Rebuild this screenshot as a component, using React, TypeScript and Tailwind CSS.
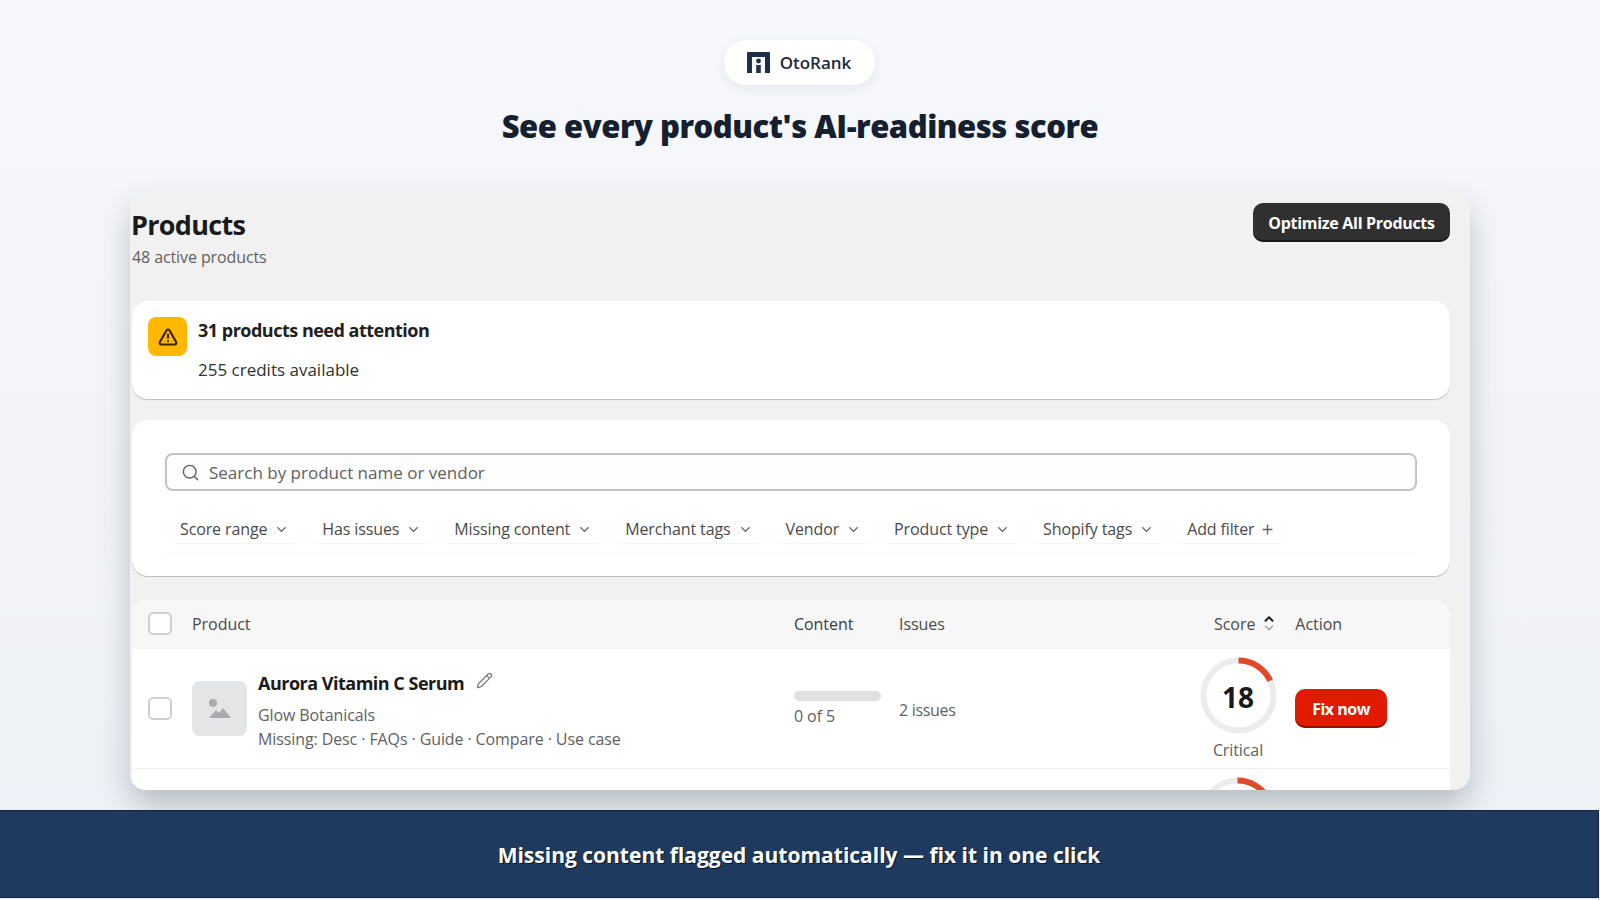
import { AlertTriangle, ChevronDown, ChevronUp, Pencil, Plus, Search } from "lucide-react";

const filters = ["Score range", "Has issues", "Missing content", "Merchant tags", "Vendor", "Product type", "Shopify tags"];

const Logo = () => (
  <svg width="23" height="21" viewBox="0 0 23 21" className="text-[#1e2f4d]">
    <path d="M1 0h21a1 1 0 0 1 1 1v20h-5V5H5v16H0V1a1 1 0 0 1 1-1z" fill="currentColor" />
    <circle cx="11.5" cy="9" r="2.4" fill="currentColor" />
    <rect x="9.2" y="13" width="4.6" height="8" fill="currentColor" />
  </svg>
);

const ScoreRing = ({ score }: { score: number }) => {
  const r = 35;
  const c = 2 * Math.PI * r;
  return (
    <svg width="77" height="77" viewBox="0 0 77 77" className="shrink-0">
      <circle cx="38.5" cy="38.5" r={r} fill="none" stroke="#ececec" strokeWidth="6" />
      <circle
        cx="38.5"
        cy="38.5"
        r={r}
        fill="none"
        stroke="#e2492b"
        strokeWidth="6"
        strokeDasharray={`${(c * score) / 100} ${c}`}
        transform="rotate(-90 38.5 38.5)"
      />
    </svg>
  );
};

const Checkbox = () => (
  <div className="h-[23px] w-6 shrink-0 rounded-[5px] border-2 border-[#d0d0d0] bg-white" />
);

export default function App() {
  return (
    <div className="flex h-[900px] w-[1600px] flex-col overflow-hidden bg-gradient-to-b from-[#f7f8fb] to-[#edf0f6] font-['Open_Sans','Noto_Sans',sans-serif] text-[#303030]">
      <div className="flex h-[190px] shrink-0 flex-col items-center pt-[40px]">
        <div className="mr-[2px] flex h-[45px] w-[151px] items-center justify-center gap-[10px] rounded-[22px] bg-white shadow-[0_3px_12px_rgba(30,50,80,0.08)]">
          <Logo />
          <span className="text-[17px] font-semibold text-[#1e2a3c]">OtoRank</span>
        </div>
        <h1 className="mt-[19px] text-[31px] font-extrabold leading-[44px] tracking-[-0.47px] text-[#14202f]">
          See every product's AI-readiness score
        </h1>
      </div>

      <div className="mx-[130px] flex h-[600px] shrink-0 flex-col overflow-hidden rounded-[16px] bg-[#f1f1f1] pl-[2px] pr-[20px] shadow-[0_16px_32px_-2px_rgba(40,60,65,0.3)]">
        <div className="flex h-[111px] shrink-0 items-start justify-between pt-[13px]">
          <div>
            <h2 className="-ml-[1px] mt-[4px] text-[27px] font-bold leading-[36px] tracking-[-0.7px] text-[#1a1a1a]">Products</h2>
            <p className="mt-[2px] text-[16px] leading-[24px] tracking-[-0.1px] text-[#616161]">48 active products</p>
          </div>
          <button className="flex h-[39px] w-[197px] items-center justify-center rounded-[10px] bg-[#303030] text-[16px] font-bold tracking-[-0.3px] text-white shadow-[inset_0_-2px_0_rgba(0,0,0,0.45)]">
            Optimize All Products
          </button>
        </div>

        <div className="flex h-[98px] shrink-0 gap-[11px] rounded-[16px] bg-white px-[16px] pt-[16px] shadow-[0_1px_1px_rgba(0,0,0,0.22)]">
          <div className="flex h-[39px] w-[39px] shrink-0 items-center justify-center rounded-[8px] bg-[#ffb800]">
            <AlertTriangle size={20} strokeWidth={2.6} className="text-[#3a2600]" />
          </div>
          <div className="pt-[1px]">
            <div className="text-[18px] font-bold leading-[24px] tracking-[-0.5px] text-[#202020]">31 products need attention</div>
            <div className="mt-[16px] text-[17px] leading-[24px] text-[#303030]">255 credits available</div>
          </div>
        </div>

        <div className="mt-[21px] flex h-[156px] shrink-0 flex-col rounded-[16px] bg-white px-[33px] pt-[33px] shadow-[0_1px_1px_rgba(0,0,0,0.22)]">
          <div className="flex h-[38px] items-center gap-[9px] rounded-[8px] border-2 border-[#c4c4c4] bg-[#fdfdfd] px-[14px]">
            <Search size={19} strokeWidth={1.8} className="text-[#616161]" />
            <span className="pt-[2px] text-[17px] text-[#616161]">Search by product name or vendor</span>
          </div>
          <div className="mt-[24px] flex items-center gap-[9px] border-b border-[#f6f6f6] pb-[10px] pl-[3px]">
            {filters.map((f) => (
              <div key={f} className="flex h-[28px] items-center gap-[7px] rounded-[8px] px-[12px] text-[16px] tracking-[-0.12px] text-[#4a4a4a] shadow-[0_1px_2px_rgba(0,0,0,0.05)]">
                {f}
                <ChevronDown size={15} strokeWidth={2.2} className="text-[#616161]" />
              </div>
            ))}
            <div className="flex h-[28px] items-center gap-[6px] rounded-[8px] px-[12px] text-[16px] tracking-[-0.12px] text-[#4a4a4a] shadow-[0_1px_2px_rgba(0,0,0,0.05)]">
              Add filter
              <Plus size={15} strokeWidth={2.2} className="text-[#616161]" />
            </div>
          </div>
        </div>

        <div className="mt-[24px] flex min-h-0 flex-1 flex-col overflow-hidden rounded-t-[16px] bg-white">
          <div className="flex h-[49px] shrink-0 items-center bg-[#f7f7f7] pb-[2px] pl-[16px] text-[16px] tracking-[-0.05px] text-[#4a4a4a]">
            <Checkbox />
            <span className="ml-[20px] w-[602px]">Product</span>
            <span className="w-[105px] text-[#3c3c3c]">Content</span>
            <span className="w-[315px]">Issues</span>
            <span>Score</span>
            <div className="ml-[4px] flex w-[20px] flex-col items-center">
              <ChevronUp size={14} strokeWidth={3.4} className="-mb-[5px] text-[#202020]" />
              <ChevronDown size={14} strokeWidth={2.2} className="text-[#9a9a9a]" />
            </div>
            <span className="ml-[16px]">Action</span>
          </div>

          <div className="flex h-[120px] shrink-0 border-b border-[#f1f1f1] pl-[16px]">
            <div className="flex items-center"><Checkbox /></div>
            <div className="ml-[20px] mt-[32px] flex h-[55px] w-[55px] shrink-0 items-center justify-center rounded-[8px] bg-[#e4e5e7]">
              <svg width="28" height="24" viewBox="0 0 28 24" fill="#a9abae">
                <circle cx="7" cy="6" r="4" />
                <path d="M3 21l7-8 3 3 4-5 8 10z" />
              </svg>
            </div>
            <div className="ml-[11px] w-[536px] shrink-0 pt-[21px]">
              <div className="flex items-center gap-[12px]">
                <span className="text-[18px] font-bold leading-[26px] tracking-[-0.5px] text-[#1a1a1a]">Aurora Vitamin C Serum</span>
                <Pencil size={17} strokeWidth={1.7} className="-mt-[6px] text-[#7a7a7a]" />
              </div>
              <div className="mt-[8px] text-[16px] leading-[22px] tracking-[-0.1px] text-[#616161]">Glow Botanicals</div>
              <div className="mt-[1px] text-[16px] leading-[24px] tracking-[-0.1px] text-[#616161]">Missing: Desc · FAQs · Guide · Compare · Use case</div>
            </div>
            <div className="w-[105px] shrink-0 pt-[42px]">
              <div className="h-[10px] w-[87px] rounded-full bg-[#e0e0e0]" />
              <div className="mt-[4px] text-[16px] leading-[22px] tracking-[-0.1px] text-[#616161]">0 of 5</div>
            </div>
            <div className="w-[300px] shrink-0 pt-[50px] text-[16px] leading-[22px] tracking-[-0.3px] text-[#616161]">2 issues</div>
            <div className="relative flex w-[78px] shrink-0 flex-col items-center pt-[8px]">
              <ScoreRing score={18} />
              <span className="absolute top-[28px] text-[28px] font-bold leading-[40px] text-[#1a1a1a]">18</span>
              <span className="mt-[5px] text-[16px] leading-[22px] tracking-[-0.1px] text-[#616161]">Critical</span>
            </div>
            <div className="ml-[18px] pt-[40px]">
              <button className="flex h-[39px] w-[92px] items-center justify-center rounded-[10px] bg-[#e01b00] text-[16px] font-bold tracking-[-0.5px] text-white shadow-[inset_0_-2px_0_rgba(110,10,0,0.7)]">
                Fix now
              </button>
            </div>
          </div>

          <div className="flex justify-start pl-[1067px] pt-[8px]">
            <ScoreRing score={18} />
          </div>
        </div>
      </div>

      <div className="mt-[20px] flex h-[88px] w-[1599px] shrink-0 items-center justify-center border-y border-r border-[#14243f] bg-[#1e3a5f] pt-[3px] text-[21px] font-bold text-white [text-shadow:1px_1px_0_#0b1626]">
        Missing content flagged automatically — fix it in one click
      </div>
    </div>
  );
}
